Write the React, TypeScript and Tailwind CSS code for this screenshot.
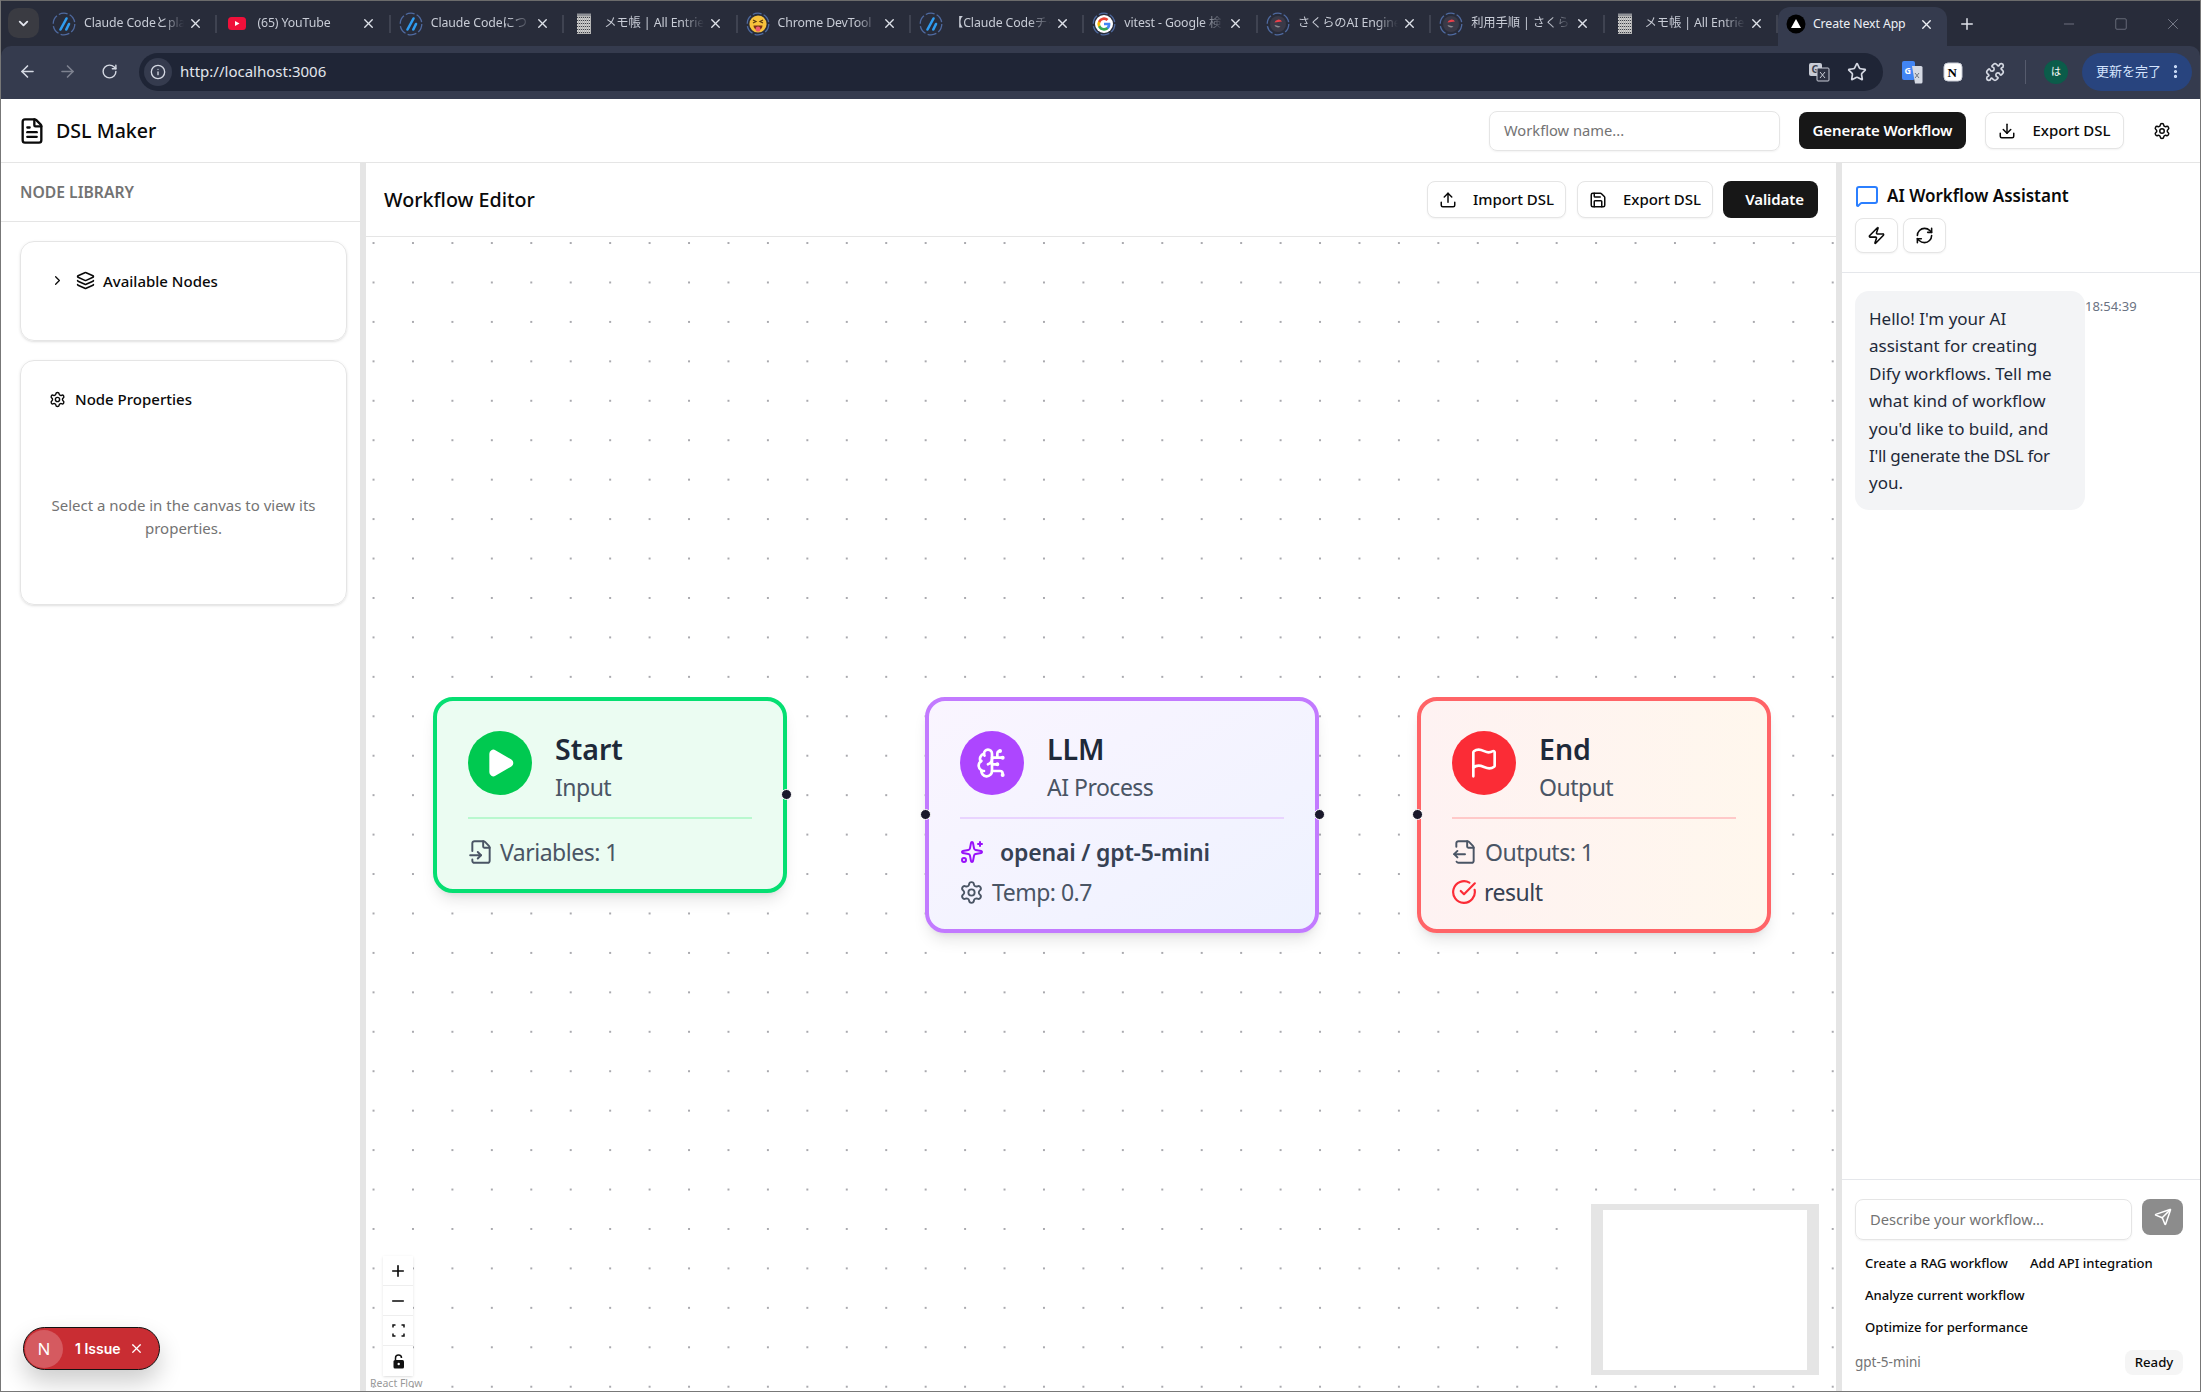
import React from "react";
import {
  FileText, ChevronRight, ChevronDown, Layers, Settings, MessageSquare, Zap, RefreshCw, Upload, Download, Save, Play,
  BrainCircuit, Sparkles, FileInput, FileOutput, CircleCheckBig, Flag, Send, Plus, Minus, X, ArrowLeft, ArrowRight, RotateCw,
  Info, Star, Puzzle, Square, EllipsisVertical,
} from "lucide-react";

const Ring = () => (
  <circle cx="12" cy="12" r="10.8" fill="none" stroke="#4f6aa0" strokeWidth="1.3" strokeDasharray="9 2.300" />
);
const BlogIcon = () => (
  <svg width="24" height="24" viewBox="0 0 24 24">
    <Ring />
    <path d="M14.500 6.500 L8.500 17.500 M17 12 L14.300 17.500" stroke="#2f9df0" strokeWidth="2.600" strokeLinecap="round" />
  </svg>
);
const YouTubeIcon = () => (
  <svg width="20" height="20" viewBox="0 0 20 20">
    <rect x="1" y="3" width="18" height="13" rx="3.500" fill="#f0103a" />
    <path d="M8 7 L12.500 9.500 L8 12 Z" fill="#fff" />
  </svg>
);
const MemoIcon = () => (
  <svg width="20" height="24" viewBox="0 0 20 24">
    <rect x="3" y="2" width="14" height="20" fill="#b5b5b5" />
    <path d="M3 5.500h14M3 8.500h14M3 11.500h14M3 14.500h14M3 17.500h14M3 20.500h14" stroke="#3f424a" strokeWidth="1" strokeDasharray="1 1" />
    <path d="M3 7h14M3 10h14M3 13h14M3 16h14M3 19h14" stroke="#e8e8e8" strokeWidth="1" strokeDasharray="1 1" />
    <rect x="3" y="1.500" width="14" height="2.500" fill="#8e9096" />
  </svg>
);
const EmojiIcon = () => (
  <svg width="24" height="24" viewBox="0 0 24 24">
    <Ring />
    <circle cx="12" cy="12" r="8.600" fill="#f7c23c" />
    <path d="M7 8l3 1.500-3 1.500M17 8l-3 1.500 3 1.500" stroke="#5a3a10" strokeWidth="1.200" fill="none" />
    <path d="M7.500 13.500h9a4.500 4.500 0 0 1-9 0z" fill="#7a2f18" />
    <ellipse cx="12" cy="17" rx="2.400" ry="2.600" fill="#ee5a6f" />
  </svg>
);
const GoogleIcon = () => (
  <svg width="24" height="24" viewBox="0 0 24 24">
    <Ring />
    <circle cx="12" cy="12" r="9" fill="#fff" />
    <g transform="translate(2.400 2.400) scale(0.8)">
      <path d="M20 12.200c0-.6-.1-1.200-.2-1.700H12v3.200h4.500a3.900 3.900 0 0 1-1.700 2.500v2.100h2.700c1.600-1.400 2.500-3.600 2.500-6.100z" fill="#4285F4" />
      <path d="M12 20.300c2.200 0 4.100-.7 5.500-2l-2.700-2.100c-.7.500-1.700.8-2.800.8-2.200 0-4-1.500-4.600-3.400H4.600v2.200a8.300 8.300 0 0 0 7.400 4.500z" fill="#34A853" />
      <path d="M7.400 13.600a5 5 0 0 1 0-3.200V8.200H4.600a8.300 8.300 0 0 0 0 7.600z" fill="#FBBC05" />
      <path d="M12 7c1.200 0 2.300.4 3.200 1.200l2.400-2.400A8.300 8.300 0 0 0 4.600 8.200l2.800 2.200C8 8.500 9.800 7 12 7z" fill="#EA4335" />
    </g>
  </svg>
);
const SakuraIcon = () => (
  <svg width="24" height="24" viewBox="0 0 24 24">
    <Ring />
    <circle cx="12" cy="12" r="8" fill="#3a3a48" />
    <path d="M8.500 10.500 a4 3.500 0 0 1 7.500 -1 z" fill="#e8404a" />
    <path d="M8.500 13 a3.500 3 0 0 0 6 1.500 z" fill="#8a8a90" />
  </svg>
);
const NextIcon = () => (
  <svg width="20" height="20" viewBox="0 0 20 20">
    <circle cx="10" cy="10" r="9.500" fill="#000" />
    <path d="M10 5 L15 14 H5 Z" fill="#fff" />
  </svg>
);

const tabs: { t: string; i: React.ReactNode }[] = [
  { t: "Claude Codeとpla", i: <BlogIcon /> },
  { t: "(65) YouTube", i: <YouTubeIcon /> },
  { t: "Claude Codeにつ", i: <BlogIcon /> },
  { t: "メモ帳 | All Entrie", i: <MemoIcon /> },
  { t: "Chrome DevTool", i: <EmojiIcon /> },
  { t: "【Claude Codeチャ", i: <BlogIcon /> },
  { t: "vitest - Google 検", i: <GoogleIcon /> },
  { t: "さくらのAI Engine", i: <SakuraIcon /> },
  { t: "利用手順 | さくらの", i: <SakuraIcon /> },
  { t: "メモ帳 | All Entrie", i: <MemoIcon /> },
];

function BrowserChrome() {
  return (
    <div className="flex flex-col shrink-0 bg-[#282c3a]">
      <div className="h-[46px] border-t border-[#6b6b6b] flex items-end">
        <div className="w-[31px] h-[30px] ml-[7px] mb-[8px] rounded-[10px] bg-[#3a3b42] flex items-center justify-center text-[#e3e6ee] shrink-0">
          <ChevronDown size={15} strokeWidth={3} />
        </div>
        <div className="w-[5px] shrink-0" />
        {tabs.map((tb, i) => (
          <div key={i} className="w-[173.400px] h-[45px] shrink-0 flex items-center relative text-[#c8ccd6]">
            <div className="w-[40px] flex items-center justify-center shrink-0">{tb.i}</div>
            <div className="w-[100px] overflow-hidden whitespace-nowrap text-[12.300px] tracking-[-0.1px] [mask-image:linear-gradient(to_right,black_78%,transparent)]">
              {tb.t}
            </div>
            <X size={15} strokeWidth={2.200} className="ml-[4px] text-[#dfe2ea]" />
            <div className="absolute right-0 top-[14px] w-[2px] h-[18px] bg-[#3f4351]" />
          </div>
        ))}
        <div className="w-[169px] h-[39px] shrink-0 bg-[#353b4e] rounded-t-[12px] flex items-center pb-[5px] text-[#eef0f5]">
          <div className="w-[34px] flex items-center justify-center shrink-0 ml-[1px]"><NextIcon /></div>
          <div className="w-[106px] whitespace-nowrap overflow-hidden text-[12.300px] tracking-[-0.1px]">Create Next App</div>
          <X size={15} strokeWidth={2.200} />
        </div>
        <Plus size={18} className="ml-[11px] mb-[13px] text-[#dfe2ea]" />
        <Minus size={16} strokeWidth={1.200} className="ml-[85px] mb-[14px] text-[#7e8290]" />
        <Square size={14} strokeWidth={1.200} className="ml-[37px] mb-[15px] text-[#7e8290]" />
        <X size={18} strokeWidth={1.200} className="ml-[36px] mb-[13px] text-[#7e8290]" />
      </div>
      <div className="h-[53px] bg-[#353b4e] rounded-t-[10px] flex items-center pb-[2px] text-[#d5d9e3]">
        <ArrowLeft size={19} className="ml-[17px]" />
        <ArrowRight size={19} className="ml-[21px] text-[#7e8290]" />
        <RotateCw size={17} className="ml-[24px]" />
        <div className="ml-[21px] w-[1744px] h-[38px] rounded-full bg-[#1f2536] flex items-center pl-[5px] pr-[16px] shrink-0">
          <div className="w-[28px] h-[28px] rounded-full bg-[#353b4e] flex items-center justify-center shrink-0">
            <Info size={16} />
          </div>
          <span className="ml-[8px] text-[15px] text-[#e2e5ec]">http://localhost:3006</span>
          <svg width="22" height="22" viewBox="0 0 22 22" className="ml-auto">
            <rect x="1" y="2" width="13" height="13" rx="2" fill="#c8ccd6" />
            <text x="3.500" y="12" fontSize="10" fontWeight="700" fill="#3a3f50">G</text>
            <rect x="9" y="7" width="12" height="13" rx="1" fill="#2c3142" stroke="#c8ccd6" />
            <path d="M12 11l5 6M17 11l-5 6" stroke="#c8ccd6" strokeWidth="1" />
          </svg>
          <Star size={20} className="ml-[17px]" />
        </div>
        <svg width="22" height="24" viewBox="0 0 22 24" className="ml-[18px] shrink-0">
          <rect x="1" y="1" width="13" height="19" rx="2" fill="#4285f4" />
          <path d="M11 6h9a1.500 1.500 0 0 1 1.500 1.500V22a1.500 1.500 0 0 1-1.500 1.500h-6z" fill="#d5d9e3" />
          <text x="3.500" y="14" fontSize="9" fill="#fff" fontWeight="700">G</text>
          <path d="M14 13l4 5M18 13l-4 5" stroke="#6c7280" strokeWidth="1" />
        </svg>
        <svg width="22" height="22" viewBox="0 0 22 22" className="ml-[19px] shrink-0">
          <rect x="2" y="2" width="18" height="18" rx="4" fill="#fff" stroke="#c8ccd6" />
          <text x="5.500" y="16" fontSize="13" fill="#000" fontWeight="700" fontFamily="Liberation Serif">N</text>
        </svg>
        <Puzzle size={20} className="ml-[21px] shrink-0" />
        <div className="ml-[20px] w-[1px] h-[24px] bg-[#565b6d] shrink-0" />
        <div className="ml-[18px] w-[24px] h-[24px] rounded-full bg-[#0b5c4a] flex items-center justify-center text-[10px] text-white shrink-0">は</div>
        <div className="ml-[14px] w-[110px] h-[38px] rounded-full bg-[#28447e] flex items-center pl-[14px] text-[#d3e3fd] text-[13px] shrink-0">
          更新を完了
          <EllipsisVertical size={17} strokeWidth={2.500} className="ml-[6px]" />
        </div>
      </div>
    </div>
  );
}

const btnOutline = "flex items-center justify-center rounded-[8px] border border-[#e5e5e5] bg-white shadow-xs text-[15px] font-medium text-[#0a0a0a]";

function Handle({ className }: { className: string }) {
  return <div className={"absolute w-[11px] h-[11px] rounded-full bg-[#1a192b] border border-white " + className} />;
}

function Node({ pos, box, circle, divider, icon, title, sub, children }: {
  pos: string; box: string; circle: string; divider: string; icon: React.ReactNode; title: string; sub: string; children: React.ReactNode;
}) {
  return (
    <div className={"absolute rounded-[20px] border-[4px] shadow-lg px-[31px] pt-[30px] " + pos + " " + box}>
      <div className="flex gap-[23px]">
        <div className={"w-[64px] h-[64px] rounded-full flex items-center justify-center text-white shrink-0 " + circle}>{icon}</div>
        <div className="flex flex-col -mt-[2px] h-[64px]">
          <div className="text-[28.500px] leading-[40px] font-semibold text-[#1e2939]">{title}</div>
          <div className="text-[23px] tracking-[-0.500px] leading-[36px] text-[#4a5565]">{sub}</div>
        </div>
      </div>
      <div className={"h-[2px] mt-[22px] " + divider} />
      <div className="mt-[13px] flex flex-col text-[23px] tracking-[-0.500px] text-[#4a5565]">{children}</div>
    </div>
  );
}

export default function App() {
  return (
    <div className="w-[2201px] h-[1392px] flex flex-col overflow-hidden bg-white font-['Noto_Sans','Noto_Sans_CJK_JP',sans-serif] text-[#0a0a0a] border-b border-x border-[#777]">
      <BrowserChrome />
      <header className="h-[64px] shrink-0 flex items-center border-b border-[#e5e5e5] bg-white">
        <FileText size={28} className="ml-[17px]" />
        <span className="ml-[10px] text-[19.600px] font-medium">DSL Maker</span>
        <div className="ml-auto w-[291px] h-[40px] rounded-[8px] border border-[#e5e5e5] shadow-xs flex items-center px-[14px] text-[14.700px] text-[#737373]">Workflow name...</div>
        <button className="ml-[19px] w-[167px] h-[37px] rounded-[8px] bg-[#171717] text-white text-[15px] font-semibold tracking-[-0.1px]">Generate Workflow</button>
        <button className={btnOutline + " ml-[19px] w-[139px] h-[37px] gap-[16px]"}><Download size={18} />Export DSL</button>
        <Settings size={18} className="ml-[29px] mr-[29px]" />
      </header>
      <div className="flex-1 flex min-h-0">
        <aside className="w-[359px] shrink-0 bg-white flex flex-col">
          <div className="h-[59px] flex items-center pl-[19px] pt-[2px] border-b border-[#e5e5e5] text-[15.700px] font-semibold text-[#737373] shrink-0">NODE LIBRARY</div>
          <div className="flex flex-col gap-[19px] pl-[19px] pr-[13px] pt-[19px]">
            <div className="h-[100px] rounded-[14px] border border-[#e5e5e5] shadow-sm flex items-start pt-[29px] pl-[29px]">
              <ChevronRight size={15} className="mt-[2px]" />
              <Layers size={19} className="ml-[11px]" />
              <span className="ml-[8px] text-[15px] font-medium leading-[20px]">Available Nodes</span>
            </div>
            <div className="h-[245px] rounded-[14px] border border-[#e5e5e5] shadow-sm flex flex-col pt-[28px]">
              <div className="flex items-center pl-[28px] gap-[9px]">
                <Settings size={17} />
                <span className="text-[15px] font-medium leading-[20px]">Node Properties</span>
              </div>
              <p className="mt-[85px] px-[20px] text-center text-[15px] leading-[23px] text-[#737373]">Select a node in the canvas to view its properties.</p>
            </div>
          </div>
        </aside>
        <div className="w-[6px] bg-[#e5e5e5] shrink-0" />
        <main className="flex-1 flex flex-col min-w-0">
          <div className="h-[74px] shrink-0 flex items-center pl-[18px] pr-[18px] border-b border-[#e5e5e5]">
            <span className="text-[19.700px] font-medium">Workflow Editor</span>
            <button className={btnOutline + " ml-auto w-[139px] h-[37px] gap-[16px]"}><Upload size={18} />Import DSL</button>
            <button className={btnOutline + " ml-[11px] w-[136px] h-[37px] gap-[16px]"}><Save size={18} />Export DSL</button>
            <button className="ml-[10px] w-[95px] h-[37px] pl-[8px] rounded-[8px] bg-[#171717] text-white text-[15px] font-semibold tracking-[-0.1px]">Validate</button>
          </div>
          <div className="flex-1 relative bg-white bg-[radial-gradient(#a9a9ae_1.100px,transparent_1.100px)] bg-[size:39.440px_39.440px] bg-[position:-12.200px_-13.700px]">
            <Node pos="left-[67px] top-[460px] w-[354px] h-[196px]" box="border-[#05df72] bg-[#ebfcf2]" circle="bg-[#00c950]" divider="bg-[#b9f8cf]"
              icon={<Play size={32} fill="white" strokeWidth={2} />} title="Start" sub="Input">
              <div className="flex items-center h-[40px]"><FileInput size={26} className="mr-[6px]" strokeWidth={1.800} />Variables: 1</div>
            </Node>
            <Handle className="left-[415px] top-[552px]" />
            <Node pos="left-[559px] top-[460px] w-[394px] h-[236px]" box="border-[#c27aff] bg-gradient-to-br from-[#faf5ff] to-[#eef2ff]" circle="bg-[#ad46ff]" divider="bg-[#e9d4ff]"
              icon={<BrainCircuit size={32} strokeWidth={2} />} title="LLM" sub="AI Process">
              <div className="flex items-center h-[40px] font-semibold tracking-[-0.200px] text-[#364153]"><Sparkles size={24} className="mr-[16px] text-[#9810fa]" strokeWidth={2} />openai / gpt-5-mini</div>
              <div className="flex items-center h-[40px]"><Settings size={25} className="mr-[8px] -ml-[1px]" strokeWidth={1.800} />Temp: 0.7</div>
            </Node>
            <Handle className="left-[554px] top-[572px]" />
            <Handle className="left-[948px] top-[572px]" />
            <Node pos="left-[1051px] top-[460px] w-[354px] h-[236px]" box="border-[#ff6467] bg-gradient-to-r from-[#fef2f2] to-[#fff7ed]" circle="bg-[#fb2c36]" divider="bg-[#ffc9c9]"
              icon={<Flag size={32} strokeWidth={2} />} title="End" sub="Output">
              <div className="flex items-center h-[40px]"><FileOutput size={26} className="mr-[7px]" strokeWidth={1.800} />Outputs: 1</div>
              <div className="flex items-center h-[40px] text-[#364153]"><CircleCheckBig size={26} className="mr-[7px] -ml-[1px] text-[#fb2c36]" strokeWidth={2} />result</div>
            </Node>
            <Handle className="left-[1046px] top-[572px]" />
            <div className="absolute left-[17px] bottom-[15px] w-[30px] flex flex-col bg-white shadow-sm">
              <div className="h-[30px] flex items-center justify-center border-b border-[#eee]"><Plus size={18} strokeWidth={2.200} /></div>
              <div className="h-[30px] flex items-center justify-center border-b border-[#eee]"><Minus size={18} strokeWidth={2.200} /></div>
              <div className="h-[30px] flex items-center justify-center border-b border-[#eee]">
                <svg width="13" height="13" viewBox="0 0 13 13" fill="none" stroke="#111" strokeWidth="1.500"><path d="M1 3.500V1H3.500M9.500 1H12V3.500M12 9.500V12H9.500M3.500 12H1V9.500" /></svg>
              </div>
              <div className="h-[30px] flex items-center justify-center">
                <svg width="13" height="15" viewBox="0 0 13 15"><path d="M3.500 6V4a3 3 0 0 1 6 0" fill="none" stroke="#111" strokeWidth="1.500" /><rect x="1.500" y="6" width="10.500" height="8.500" rx="1.500" fill="#111" /><circle cx="6.700" cy="10" r="1.200" fill="#fff" /></svg>
              </div>
            </div>
            <div className="absolute left-[2px] bottom-[1px] px-[2px] text-[10.500px] leading-[14px] text-[#999]">React Flow</div>
            <div className="absolute left-[1225px] bottom-[16px] w-[228px] h-[171px] bg-[#e5e5e5] flex items-center justify-center">
              <div className="w-[204px] h-[160px] bg-white" />
            </div>
          </div>
        </main>
        <div className="w-[6px] bg-[#e5e5e5] shrink-0" />
        <section className="w-[358px] shrink-0 bg-white flex flex-col">
          <div className="h-[110px] shrink-0 border-b border-[#e5e7eb] px-[13px] pt-[20px]">
            <div className="flex items-center gap-[8px]">
              <MessageSquare size={24} className="text-[#2b7fff]" />
              <span className="text-[17px] font-semibold">AI Workflow Assistant</span>
            </div>
            <div className="flex gap-[5px] mt-[9px]">
              <div className={btnOutline + " w-[43px] h-[35px]"}><Zap size={19} /></div>
              <div className={btnOutline + " w-[43px] h-[35px]"}><RefreshCw size={19} /></div>
            </div>
          </div>
          <div className="flex-1 flex items-start px-[13px] pt-[18px]">
            <div className="w-[230px] h-[219px] rounded-[14px] bg-[#f3f4f6] pl-[14px] pt-[14px] text-[17px] leading-[27.400px] text-[#1e2939] whitespace-nowrap">
              <div>Hello! I'm your AI</div>
              <div>assistant for creating</div>
              <div>Dify workflows. Tell me</div>
              <div>what kind of workflow</div>
              <div>you'd like to build, and</div>
              <div className="tracking-[-0.300px]">I'll generate the DSL for</div>
              <div>you.</div>
            </div>
            <span className="text-[13px] leading-[18px] mt-[6px] text-[#6a7282]">18:54:39</span>
          </div>
          <div className="h-[212px] shrink-0 border-t border-[#e5e7eb] pl-[13px] pr-[17px] pt-[19px]">
            <div className="flex items-start gap-[10px]">
              <div className="w-[277px] h-[41px] rounded-[8px] border border-[#e5e5e5] shadow-xs flex items-center px-[14px] text-[14.700px] text-[#737373]">Describe your workflow...</div>
              <div className="w-[41px] h-[36px] rounded-[8px] bg-[#8c8c8c] flex items-center justify-center text-white"><Send size={18} /></div>
            </div>
            <div className="flex flex-wrap mt-[7px] pl-[10px] text-[13.100px] font-medium leading-[32px]">
              <span className="w-[165px]">Create a RAG workflow</span>
              <span>Add API integration</span>
              <span className="w-full">Analyze current workflow</span>
              <span className="w-full">Optimize for performance</span>
            </div>
            <div className="flex items-center justify-between mt-[7px]">
              <span className="text-[13.500px] text-[#737373]">gpt-5-mini</span>
              <span className="w-[58px] h-[25px] rounded-[8px] bg-[#f5f5f5] flex items-center justify-center text-[13.200px] font-medium">Ready</span>
            </div>
          </div>
        </section>
      </div>
      <div className="absolute left-[23px] top-[1327px] w-[137px] h-[43px] rounded-full bg-[#c92d33] border border-[#111] shadow-[0_12px_24px_rgba(0,0,0,0.2)] flex items-center text-white">
        <div className="ml-[1px] w-[38px] h-[38px] rounded-full bg-[#d55a60] flex items-center justify-center text-[17px]">N</div>
        <span className="ml-[12px] text-[14px] font-semibold font-['Inter']">1 Issue</span>
        <X size={15} className="ml-[8px]" />
      </div>
    </div>
  );
}
